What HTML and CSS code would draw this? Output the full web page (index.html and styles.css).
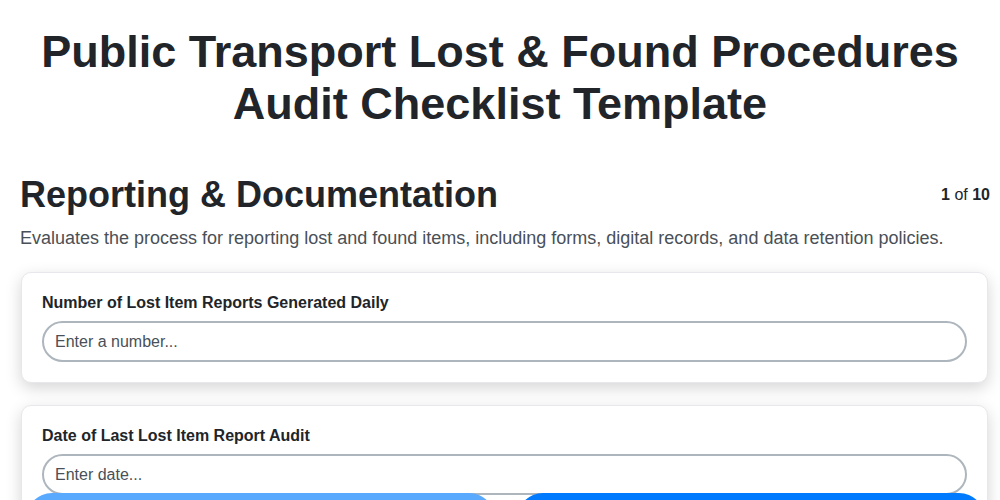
FILE: index.html
```html
<!DOCTYPE html>
<html lang="en">
<head>
    <meta charset="UTF-8">
    <meta name="viewport" content="width=device-width, initial-scale=1.0">
    <title>Public Transport Lost &amp; Found Procedures Audit Checklist Template</title>
    <link rel="stylesheet" href="styles.css">
</head>
<body>
    <h1 class="page-title">Public Transport Lost &amp; Found Procedures<br>Audit Checklist Template</h1>

    <main class="section">
        <div class="section-head">
            <h2>Reporting &amp; Documentation</h2>
            <span class="progress"><b>1</b> of <b>10</b></span>
        </div>
        <p class="section-desc">Evaluates the process for reporting lost and found items, including forms, digital records, and data retention policies.</p>

        <div class="question">
            <label for="q1">Number of Lost Item Reports Generated Daily</label>
            <input id="q1" type="text" placeholder="Enter a number...">
        </div>

        <div class="question">
            <label for="q2">Date of Last Lost Item Report Audit</label>
            <input id="q2" type="text" placeholder="Enter date...">
        </div>
    </main>

    <!-- nav buttons stay pinned to the bottom -->
    <nav class="nav-buttons">
        <button class="nav-btn prev" disabled>Previous</button>
        <button class="nav-btn next">Next</button>
    </nav>
</body>
</html>
```

FILE: styles.css
```css
/* General */
body {
    font-family: "Liberation Sans", Arial, sans-serif;
    color: #212529;
    background-color: #fff;
    margin: 0;
    padding: 0;
}

.page-title {
    text-align: center;
    font-size: 45px;
    line-height: 52px;
    margin: 26px 0 0;
}

/* Section */
.section {
    padding: 0 12px 80px 20px;
}

.section-head {
    display: flex;
    justify-content: space-between;
    align-items: center;
    margin-top: 43px;
}

.section-head h2 {
    font-size: 36px;
    line-height: 43px;
    margin: 0;
}

.progress {
    font-size: 16px;
    margin-right: -2px;
}

.section-desc {
    font-size: 18px;
    line-height: 26px;
    color: #495057;
    margin: 9px 0 21px;
}

/* Question cards */
.question {
    display: flex;
    flex-direction: column;
    background-color: #fff;
    border: 1px solid #e8e8ec;
    border-radius: 10px;
    box-shadow: 0 5px 16px rgba(0, 0, 0, 0.17);
    padding: 20px;
    margin: 0 0 22px 1px;
}

.question label {
    font-size: 16px;
    line-height: 19px;
    font-weight: bold;
    margin-bottom: 9px;
}

.question input {
    font-family: inherit;
    font-size: 16px;
    color: #495057;
    height: 41px;
    box-sizing: border-box;
    padding: 0 11px;
    border: 2px solid #adb5bd;
    border-radius: 21px;
    outline: none;
}

.question input::placeholder {
    color: #495057;
}

/* Bottom navigation */
.nav-buttons {
    position: fixed;
    left: 0;
    right: 0;
    bottom: -53px;
    display: flex;
    gap: 22px;
    padding: 0 15px 0 26px;
}

.nav-btn {
    flex: 1;
    height: 60px;
    padding-top: 30px;
    border: none;
    border-radius: 26px;
    color: #fff;
    font-family: inherit;
    font-size: 16px;
    font-weight: bold;
    background-color: #007bff;
    cursor: pointer;
}

.nav-btn.prev {
    background-color: #59a9ff;
}
```
